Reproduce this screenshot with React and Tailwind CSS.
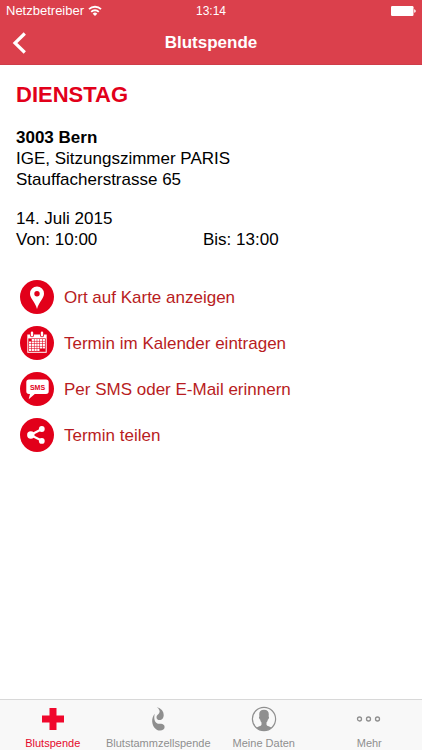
import React from "react";

function WifiIcon() {
  return (
    <svg width="14" height="12" viewBox="0 0 14 12" fill="none" stroke="white" strokeWidth="1.8" aria-hidden="true">
      <path d="M1 4.2a8.6 8.6 0 0 1 12 0" />
      <path d="M3.2 6.8a5.4 5.4 0 0 1 7.6 0" />
      <path d="M7 11 4.7 8.7a3.200 3.200 0 0 1 4.600 0z" fill="white" stroke="none" />
    </svg>
  );
}

function BatteryIcon() {
  return (
    <svg width="25" height="10" viewBox="0 0 25 10" fill="white" aria-hidden="true">
      <rect width="22.5" height="10" rx="1.2" />
      <path d="M23.2 3.2c1 .2 1.5.9 1.5 1.8s-.5 1.6-1.5 1.8z" />
    </svg>
  );
}

function Disc({ children }) {
  return (
    <svg width="34" height="34" viewBox="0 0 34 34" className="shrink-0" aria-hidden="true">
      <circle cx="17" cy="17" r="17" fill="#e2001a" />
      {children}
    </svg>
  );
}

const pin = (
  <Disc>
    <path
      fillRule="evenodd"
      fill="white"
      d="M17 6.500a7 7 0 0 0-7 7c0 2.300.9 4 2.200 6.100 2 3.200 3.800 5.800 4.800 9.400 1-3.600 2.800-6.200 4.800-9.400 1.300-2.100 2.200-3.800 2.200-6.100a7 7 0 0 0-7-7zm0 4.600a2.700 2.700 0 1 1 0 5.400 2.700 2.700 0 0 1 0-5.400z"
    />
  </Disc>
);

const dayCells = [0, 1, 2, 3, 4, 5].flatMap((c) =>
  [0, 1, 2, 3, 4].map((r) => [c, r])
).filter(([c, r]) => !(r === 0 && c < 1) && !(r === 4 && c > 3));

const calendar = (
  <Disc>
    <path d="M7.300 8.500h19.400v18.300H7.300z" fill="white" />
    <path d="M8.300 12.400h17.400v13.400H8.300z" fill="#e2001a" />
    {dayCells.map(([c, r]) => (
      <rect key={`${c}-${r}`} x={9 + c * 2.750} y={13 + r * 2.500} width="2.200" height="1.950" fill="white" />
    ))}
    {[12, 17, 22].filter((x) => x !== 17).map((x) => (
      <g key={x}>
        <rect x={x - 2} y="5" width="4" height="6.200" rx="2" fill="#e2001a" />
        <rect x={x - 1.2} y="5.500" width="2.400" height="5" rx="1.200" fill="white" />
      </g>
    ))}
  </Disc>
);

const sms = (
  <Disc>
    <path
      d="M9 7.500h17a2.700 2.700 0 0 1 2.700 2.700v9a2.700 2.700 0 0 1-2.700 2.700H14.800L8.700 27.200l1.300-5.300H9a2.700 2.700 0 0 1-2.700-2.700v-9A2.700 2.700 0 0 1 9 7.500z"
      fill="white"
    />
    <text x="17.500" y="17.500" textAnchor="middle" fill="#e2001a" className="font-['Liberation_Sans',Arial,sans-serif] text-[7px] font-bold">
      SMS
    </text>
  </Disc>
);

const share = (
  <Disc>
    <path d="M22 11 10.500 17l11.500 5.800" fill="none" stroke="white" strokeWidth="2.200" />
    <circle cx="21.800" cy="11" r="2.900" fill="white" />
    <circle cx="10.800" cy="17" r="3.700" fill="white" />
    <circle cx="21.800" cy="22.900" r="2.900" fill="white" />
  </Disc>
);

const actions = [
  { icon: pin, label: "Ort auf Karte anzeigen" },
  { icon: calendar, label: "Termin im Kalender eintragen" },
  { icon: sms, label: "Per SMS oder E-Mail erinnern" },
  { icon: share, label: "Termin teilen" },
];

const crossIcon = (
  <svg width="26" height="26" viewBox="0 0 26 26" aria-hidden="true">
    <path d="M9.500 2h7v7.500H24v7h-7.500V24h-7v-7.500H2v-7h7.500z" fill="#f0082c" />
  </svg>
);

const stemIcon = (
  <svg width="26" height="26" viewBox="0 0 26 26" fill="#8f8f8f" aria-hidden="true">
    <path d="M11.800 1.200c4.300 1 6.900 4.100 6.900 7.700 0 3-1.700 5.200-4.100 5.200-1.900 0-3.100-1.300-3.100-2.900 0-1.800 1.600-2.500 2.600-3.900 1.300-1.900.2-4.500-2.300-6.100z" />
    <path d="M9.800 7.800C7.900 10 7 12.800 7.200 15.700c.4 5.100 3.700 8.800 7.900 8.800 2.700 0 4.500-1.500 4.500-3.500s-1.700-3.100-3.600-3.200c-1.500-.1-2.500.3-3.700-.3-2.800-1.400-3.700-5.400-2.500-9.700z" />
  </svg>
);

const personIcon = (
  <svg width="26" height="26" viewBox="0 0 26 26" aria-hidden="true">
    <circle cx="13" cy="13" r="11.600" fill="none" stroke="#8f8f8f" strokeWidth="1.200" />
    <path
      d="M13 3.700c-3.200 0-4.900 2-4.800 4.700l.2 2.100c-.5.100-.5.800-.3 1.600.2.900.5 1.400 1 1.400.2 1.300.7 2.300 1.400 3v2.200c-.4 1.400-3.600 1.700-5.300 3.100C7.200 23.500 9.900 24.600 13 24.600s5.800-1.100 7.800-2.800c-1.700-1.400-4.900-1.700-5.300-3.100v-2.200c.7-.7 1.200-1.700 1.400-3 .5 0 .8-.5 1-1.400.2-.8.2-1.500-.3-1.600l.2-2.100c.1-2.700-1.600-4.700-4.800-4.700z"
      fill="#8f8f8f"
    />
  </svg>
);

const moreIcon = (
  <svg width="26" height="26" viewBox="0 0 26 26" fill="none" stroke="#8f8f8f" strokeWidth="1.300" aria-hidden="true">
    <circle cx="3.500" cy="13" r="2" />
    <circle cx="12.500" cy="13" r="2" />
    <circle cx="21.500" cy="13" r="2" />
  </svg>
);

const tabs = [
  { icon: crossIcon, label: "Blutspende", active: true },
  { icon: stemIcon, label: "Blutstammzellspende" },
  { icon: personIcon, label: "Meine Daten" },
  { icon: moreIcon, label: "Mehr" },
];

export default function App() {
  return (
    <div className="flex min-h-screen flex-col bg-white font-['Liberation_Sans',Arial,sans-serif] text-black">
      <header className="border-b border-[#cf3d49] bg-[#db404c] text-white">
        <div className="grid h-[22px] grid-cols-3 items-center px-[6px]">
          <div className="flex items-center gap-1 text-[13px]">
            Netzbetreiber
            <WifiIcon />
          </div>
          <div className="text-center text-xs">13:14</div>
          <div className="flex justify-end">
            <BatteryIcon />
          </div>
        </div>
        <div className="grid h-[42px] grid-cols-[48px_1fr_48px] items-center">
          <button type="button" aria-label="Zurück" className="flex h-full items-center pl-3">
            <svg width="14" height="22" viewBox="0 0 14 22" fill="none" stroke="white" strokeWidth="3.200" aria-hidden="true">
              <path d="M12.800 1.500 3 11l9.800 9.500" />
            </svg>
          </button>
          <h1 className="text-center text-[17px] font-bold">Blutspende</h1>
        </div>
      </header>

      <main className="flex-1 px-4 pt-4 text-[17px] leading-[21px]">
        <h2 className="text-[22px] font-bold leading-7 text-[#e2001a]">DIENSTAG</h2>
        <div className="mt-[18px]">
          <p className="font-bold">3003 Bern</p>
          <p>IGE, Sitzungszimmer PARIS</p>
          <p>Stauffacherstrasse 65</p>
        </div>
        <div className="mt-[18px]">
          <p>14. Juli 2015</p>
          <div className="grid grid-cols-[187px_1fr]">
            <p>Von: 10:00</p>
            <p>Bis: 13:00</p>
          </div>
        </div>
        <ul className="mt-[30px] flex flex-col gap-3 pl-1">
          {actions.map((a) => (
            <li key={a.label}>
              <button type="button" className="flex items-center gap-[10px] text-[#b81c22]">
                {a.icon}
                {a.label}
              </button>
            </li>
          ))}
        </ul>
      </main>

      <nav className="grid grid-cols-4 border-t border-[#d8d8d8] bg-[#f8f8f8]">
        {tabs.map((t) => (
          <a
            key={t.label}
            href="#"
            aria-current={t.active ? "page" : undefined}
            className={`flex h-[50px] flex-col items-center gap-1 whitespace-nowrap pt-[6px] text-[11px] leading-[14px] ${
              t.active ? "text-[#e5082c]" : "text-[#8f8f8f]"
            }`}
          >
            {t.icon}
            {t.label}
          </a>
        ))}
      </nav>
    </div>
  );
}
